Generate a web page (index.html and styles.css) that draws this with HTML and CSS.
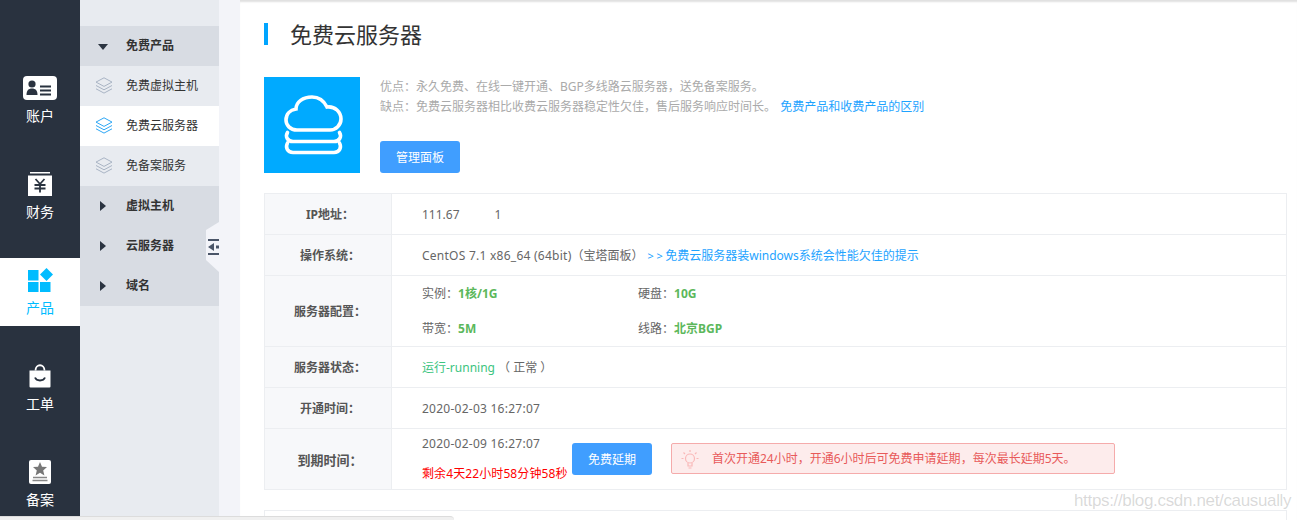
FILE: index.html
```html
<!DOCTYPE html>
<html lang="zh">
<head>
<meta charset="utf-8">
<title>免费云服务器</title>
<link rel="stylesheet" href="styles.css">
</head>
<body>
<div class="app">
  <nav class="rail">
    <a class="rail-item">
      <svg class="rail-icon" viewBox="0 0 34 24"><rect width="34" height="24" rx="4" fill="#fff"/><circle cx="9" cy="8" r="3.6" fill="#29323f"/><path d="M3.500 19c0-4.500 2-6.500 5.500-6.500s5.500 2 5.500 6.500z" fill="#29323f"/><path d="M17 10.500h11M17 14.500h11M17 18.500h11" stroke="#29323f" stroke-width="1.800"/></svg>
      <span>账户</span>
    </a>
    <a class="rail-item">
      <svg class="rail-icon" viewBox="0 0 34 24"><path d="M7 0h20v1.500H7z" fill="#fff"/><path d="M5 3.500h24V24H5z" fill="#fff"/><path d="M12.500 7l4.500 5 4.500-5M11.500 13h11M11.500 16.500h11M17 12v8.500" fill="none" stroke="#29323f" stroke-width="1.800"/></svg>
      <span>财务</span>
    </a>
    <a class="rail-item rail-active">
      <svg class="rail-icon" viewBox="0 0 34 24"><path d="M5 2h10.500v10.500H5zM5 14h10.500v10H5zM17 14h10.500v10H17z" fill="#00bcff"/><path d="M23.500 0l6.500 6.500-6.500 6.500-6.500-6.500z" fill="#00bcff"/></svg>
      <span>产品</span>
    </a>
    <a class="rail-item">
      <svg class="rail-icon" viewBox="0 0 34 24"><path d="M6.500 6.500h21v16a1 1 0 0 1-1 1h-19a1 1 0 0 1-1-1z" fill="#fff"/><path d="M12.500 6.500c0-7 9-7 9 0" fill="none" stroke="#fff" stroke-width="1.800"/><path d="M12 13.500c1.500 4 8.500 4 10 0" fill="none" stroke="#29323f" stroke-width="1.800"/></svg>
      <span>工单</span>
    </a>
    <a class="rail-item">
      <svg class="rail-icon" viewBox="0 0 34 24"><rect x="6" width="22" height="24" rx="2" fill="#fff"/><path d="M17 2l2 4.700 5 .4-3.800 3.300 1.200 5-4.400-2.700-4.400 2.700 1.200-5L10 7.100l5-.4z" fill="#777"/><path d="M10 17.500h14M9.500 20.500h15" stroke="#888" stroke-width="1.500"/></svg>
      <span>备案</span>
    </a>
  </nav>

  <aside class="submenu">
    <div class="sub-group"><i class="arrow-down"></i>免费产品</div>
    <div class="sub-item"><svg class="layers" viewBox="0 0 18 17"><path d="M9 .8l8 4.300-8 4.300-8-4.300zM1 8.500l8 4.300 8-4.300M1 11.800l8 4.300 8-4.300" fill="none" stroke="currentColor"/></svg>免费虚拟主机</div>
    <div class="sub-item sub-active"><svg class="layers" viewBox="0 0 18 17"><path d="M9 .8l8 4.300-8 4.300-8-4.300zM1 8.500l8 4.300 8-4.300M1 11.800l8 4.300 8-4.300" fill="none" stroke="currentColor"/></svg>免费云服务器</div>
    <div class="sub-item"><svg class="layers" viewBox="0 0 18 17"><path d="M9 .8l8 4.300-8 4.300-8-4.300zM1 8.500l8 4.300 8-4.300M1 11.800l8 4.300 8-4.300" fill="none" stroke="currentColor"/></svg>免备案服务</div>
    <div class="sub-group"><i class="arrow-right"></i>虚拟主机</div>
    <div class="sub-group"><i class="arrow-right"></i>云服务器</div>
    <div class="sub-group"><i class="arrow-right"></i>域名</div>
    <div class="collapse">
      <svg viewBox="0 0 11 16" class="collapse-icon"><path d="M0 0h11v2H0zM0 14h11v2H0zM0 8l6-4v8zM8 6.500h3v3H8z" fill="#4a5568"/></svg>
    </div>
  </aside>

  <div class="gutter"></div>

  <main class="main">
    <h1 class="title">免费云服务器</h1>

    <section class="intro">
      <div class="intro-logo">
        <svg viewBox="0 0 96 96"><g fill="none" stroke="#fff" stroke-width="3.600" stroke-linecap="round"><path d="M33 53C26 53 22 48 22 43C22 37 26 33 32 32C32 25 39 20 48 20C55 20 60 24 63 30C71 29 77 35 77 42C77 48 72 53 66 53Z"/><path d="M23.500 55.500c-2.500 4 0 9 5.500 9h41c5.500 0 8-5 5.500-9"/><path d="M23.500 66c-2.500 4.500 0 9.500 5.500 9.500h41c5.500 0 8-5 5.500-9.500"/></g></svg>
      </div>
      <div class="intro-body">
        <p>优点<span class="pu">：</span>永久免费、在线一键开通、BGP多线路云服务器<span class="pu">，</span>送免备案服务。</p>
        <p>缺点<span class="pu">：</span>免费云服务器相比收费云服务器稳定性欠佳<span class="pu">，</span>售后服务响应时间长。 <a class="link link-gap">免费产品和收费产品的区别</a></p>
        <button class="btn intro-btn">管理面板</button>
      </div>
    </section>

    <table class="info">
      <tr class="row-std">
        <th>IP地址<span class="pu">：</span></th>
        <td>111.67<span class="ip-mask"></span>1</td>
      </tr>
      <tr class="row-std">
        <th>操作系统<span class="pu">：</span></th>
        <td><span class="latin">CentOS 7.1 x86_64 (64bit)</span>（宝塔面板） <a class="link link-os"><span class="chevrons">&gt;&gt;</span>免费云服务器装windows系统会性能欠佳的提示</a></td>
      </tr>
      <tr class="row-config">
        <th>服务器配置<span class="pu">：</span></th>
        <td>
          <div class="config">
            <span>实例<span class="pu">：</span><b class="good">1核/1G</b></span>
            <span>硬盘<span class="pu">：</span><b class="good">10G</b></span>
            <span>带宽<span class="pu">：</span><b class="good">5M</b></span>
            <span>线路<span class="pu">：</span><b class="good">北京BGP</b></span>
          </div>
        </td>
      </tr>
      <tr class="row-std">
        <th>服务器状态<span class="pu">：</span></th>
        <td><span class="running">运行-running</span> （ 正常 ）</td>
      </tr>
      <tr class="row-std">
        <th>开通时间<span class="pu">：</span></th>
        <td><span class="latin">2020-02-03 16:27:07</span></td>
      </tr>
      <tr class="row-expire">
        <th class="th-large">到期时间<span class="pu">：</span></th>
        <td>
          <div class="expire">
            <div class="expire-times">
              <span class="latin">2020-02-09 16:27:07</span>
              <span class="remain">剩余4天22小时58分钟58秒</span>
            </div>
            <button class="btn">免费延期</button>
            <div class="alert">
              <svg class="bulb" viewBox="0 0 18 22"><g fill="none" stroke="#f9b8b8" stroke-width="1.200"><circle cx="9" cy="9.500" r="4.500"/><path d="M7 14v3h4v-3M7.500 19h3M9 1v2M2.500 3.500l1.500 1.500M15.500 3.500L14 5M.5 9.500h2M15.500 9.500h2"/></g></svg>
              <span>首次开通24小时<span class="pu">，</span>开通6小时后可免费申请延期<span class="pu">，</span>每次最长延期5天。</span>
            </div>
          </div>
        </td>
      </tr>
    </table>

    <div class="next-panel"></div>
  </main>
</div>
<div class="hscroll"></div>
<div class="watermark">https://blog.csdn.net/causually</div>
</body>
</html>
```
FILE: styles.css
```css
* { box-sizing: border-box; }
html, body { margin: 0; height: 100%; overflow: hidden; }
body {
  background: #f3f4f9;
  font-family: "Noto Sans", "Noto Sans CJK SC", sans-serif;
  font-size: 12px;
  color: #666;
}
.app { display: flex; height: 520px; }
.pu { font-family: "Noto Sans CJK TC", sans-serif; line-height: 0; }
.latin { letter-spacing: .25px; }

/* left rail */
.rail {
  width: 80px;
  height: 517px;
  background: #29323f;
  padding-top: 66px;
  display: flex;
  flex-direction: column;
  gap: 28px;
  flex: none;
  overflow: hidden;
}
.rail-item {
  height: 68px;
  flex: none;
  padding-top: 10px;
  display: flex;
  flex-direction: column;
  align-items: center;
  color: #fff;
  font-size: 14px;
  line-height: 20px;
}
.rail-icon { width: 34px; height: 24px; margin-bottom: 6px; }
.rail-active { background: #fff; color: #00bcff; }

/* sub menu */
.submenu {
  position: relative;
  width: 139px;
  height: 517px;
  background: #e8ebf0;
  padding-top: 26px;
  flex: none;
}
.sub-group, .sub-item {
  height: 40px;
  display: flex;
  align-items: center;
  padding-left: 46px;
  position: relative;
  color: #333;
  line-height: 40px;
}
.sub-group { background: #d8dce3; font-weight: 700; }
.sub-active { background: #fff; }
.layers {
  position: absolute;
  left: 15px;
  top: 11px;
  width: 18px;
  height: 17px;
  color: #a9b4c4;
}
.sub-active .layers { color: #2ea7f5; }
.arrow-down {
  position: absolute;
  left: 18px;
  top: 18px;
  border: 5.500px solid transparent;
  border-top: 6px solid #2b3441;
  border-bottom: 0;
}
.arrow-right {
  position: absolute;
  left: 20px;
  top: 15px;
  border: 5.500px solid transparent;
  border-left: 6px solid #2b3441;
  border-right: 0;
}
.collapse {
  position: absolute;
  right: 0;
  top: 222px;
  width: 13px;
  height: 50px;
  background: #f3f4f9;
  clip-path: polygon(0 8px, 100% 0, 100% 100%, 0 38px);
}
.collapse-icon {
  position: absolute;
  left: 2px;
  top: 17px;
  width: 11px;
  height: 16px;
}

.gutter { width: 21px; flex: none; }

/* main */
.main {
  flex: 1;
  min-width: 0;
  background: #fff;
  padding: 23px 10px 0 24px;
  box-shadow: inset 0 3px 2px -1px #e0e0e0;
  overflow: hidden;
}
.title {
  margin: 0 0 32px;
  height: 22px;
  border-left: 4px solid #00a5ff;
  padding-left: 22px;
  font-size: 22px;
  font-weight: 400;
  line-height: 22px;
  color: #333;
}
.intro { display: flex; gap: 20px; height: 96px; margin-bottom: 20px; }
.intro-logo { width: 96px; height: 96px; background: #00aaff; flex: none; }
.intro-logo svg { display: block; width: 96px; height: 96px; }
.intro-body { color: #aaa; }
.intro-body p { margin: 0; height: 20px; line-height: 20px; }
.link { color: #1ea3ff; }
.link-gap { margin-left: 1px; }
.link-os { margin-left: 1px; }
.chevrons { letter-spacing: 2.500px; font-size: 11px; }
.btn {
  width: 80px;
  height: 32px;
  border: 0;
  border-radius: 3px;
  background: #409eff;
  color: #fff;
  font: inherit;
  padding: 0;
  flex: none;
}
.intro-btn { display: block; margin-top: 24px; }

/* table */
.info {
  width: 1023px;
  border-collapse: collapse;
  table-layout: fixed;
}
.info th, .info td {
  border: 1px solid #eceef1;
  padding: 0;
  vertical-align: middle;
}
.info th {
  width: 127px;
  padding-left: 4px;
  background: #f7f8fa;
  color: #555;
  font-weight: 700;
}
.info .th-large { font-size: 13px; }
.info td { padding-left: 30px; color: #666; }
.row-std { height: 41px; }
.row-config { height: 71px; }
.row-expire { height: 61px; }
.ip-mask { display: inline-block; width: 35px; }
.config {
  display: grid;
  grid-template-columns: 216px 216px;
  row-gap: 18px;
  line-height: 17px;
}
.good { color: #5cb85c; font-weight: 700; }
.running { color: #3cc480; }
.expire { display: flex; align-items: center; }
.expire-times {
  display: flex;
  flex-direction: column;
  gap: 13px;
  width: 150px;
  line-height: 17px;
  white-space: nowrap;
  margin-top: -2px;
}
.remain { color: #f00; letter-spacing: .1px; }
.alert {
  margin: -2px 0 0 19px;
  width: 444px;
  height: 31px;
  display: flex;
  align-items: center;
  padding-left: 40px;
  position: relative;
  background: #fdecec;
  border: 1px solid #f5abab;
  border-radius: 2px;
  color: #e85a5a;
}
.bulb {
  position: absolute;
  left: 9px;
  top: 5px;
  width: 18px;
  height: 22px;
}
.next-panel {
  margin-top: 20px;
  width: 1023px;
  height: 40px;
  border: 1px solid #eceef1;
}

/* overlays */
.hscroll {
  position: absolute;
  left: 0;
  bottom: 0;
  width: 454px;
  height: 4px;
  background: #f0f0f0;
  border-top: 1px solid #dcdcdc;
  border-top-right-radius: 4px;
}
.watermark {
  position: absolute;
  left: 1074px;
  top: 490px;
  font-family: "Liberation Sans", sans-serif;
  font-size: 17px;
  letter-spacing: -.34px;
  line-height: 22px;
  color: rgba(120, 120, 120, 0.28);
  white-space: nowrap;
}
```
